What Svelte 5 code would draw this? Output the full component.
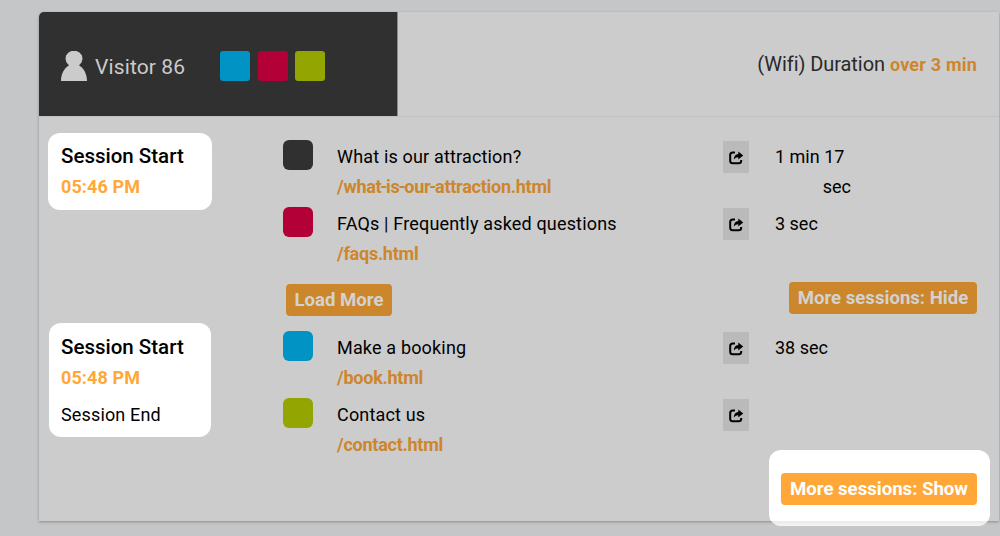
<script>
  const tags = ['#0093c4', '#b30036', '#92a500'];
  const sessions = [
    {
      time: '05:46 PM',
      ended: false,
      pages: [
        { color: '#303030', title: 'What is our attraction?', url: '/what-is-our-attraction.html', duration: '1 min 17', rest: 'sec' },
        { color: '#b30036', title: 'FAQs | Frequently asked questions', url: '/faqs.html', duration: '3 sec' }
      ]
    },
    {
      time: '05:48 PM',
      ended: true,
      pages: [
        { color: '#0093c4', title: 'Make a booking', url: '/book.html', duration: '38 sec' },
        { color: '#92a500', title: 'Contact us', url: '/contact.html', duration: '' }
      ]
    }
  ];
</script>

<div class="screen">
  <main class="card">
    <header>
      <div class="visitor">
        <svg class="person" width="26" height="30" viewBox="0 0 26 30" aria-hidden="true">
          <path d="M10.5 0h5l3 1.5L21 4.5 21.5 8 20.5 11.5 18 14.3C22.5 17 26 22.5 26 30H0C0 22.5 3.5 17 8 14.3L5.5 11.5 4.5 8 5 4.5 7.5 1.5z" fill="#cbcbcb" />
        </svg>
        <span class="name">Visitor 86</span>
        <div class="tags">
          {#each tags as color}
            <i class="tag" style="background:{color}"></i>
          {/each}
        </div>
      </div>
      <div class="total"><span class="label">(Wifi) Duration</span><b>over 3 min</b></div>
    </header>

    {#each sessions as session}
      <section class="session" class:second={session.ended}>
        <div class="info">
          <strong>Session Start</strong>
          <b>{session.time}</b>
          {#if session.ended}<span class="end">Session End</span>{/if}
        </div>
        <div class="pages">
          {#each session.pages as page}
            <div class="page">
              <i class="swatch" style="background:{page.color}"></i>
              <div class="text">
                <span class="title">{page.title}</span>
                <b>{#each page.url.split('-') as part, i}{#if i > 0}<span class="dash">-</span>{/if}{part}{/each}</b>
              </div>
              <button class="share" aria-label="Open page">
                <svg width="15" height="14" viewBox="0 0 15 14" aria-hidden="true">
                  <path d="M6 1.5H3.8Q1.2 1.5 1.2 4v5.8Q1.2 12.3 3.8 12.3h5.8Q12.2 12.3 12.2 9.8V9" fill="none" stroke="#000" stroke-width="2" />
                  <path d="M9.3 .5 14.2 4.6 9.3 8.4V6.2Q6.5 6.2 4.8 8.4 5 3.2 9.3 2.9z" />
                </svg>
              </button>
              <div class="time"><span>{page.duration}</span>{#if page.rest}<span class="rest">{page.rest}</span>{/if}</div>
            </div>
          {/each}
          {#if !session.ended}
            <div class="actions">
              <button class="action load">Load More</button>
              <button class="action hide">More sessions: Hide</button>
            </div>
          {/if}
        </div>
      </section>
    {/each}

    <footer><button class="action show">More sessions: Show</button></footer>
  </main>
</div>

<style>
  :global(body) { margin: 0; overflow: hidden; }
  * { box-sizing: border-box; }
  .screen {
    width: 1000px; height: 536px; padding: 12px 0 0 39px; overflow: hidden;
    background: #c5c6c8; font-family: Roboto, sans-serif; font-size: 18px; color: #000;
  }
  .card {
    display: flex; flex-direction: column; width: 960px; height: 509px;
    background: #cccccc; border-radius: 5px 0 0 0;
    box-shadow: 0 1px 3px rgba(0, 0, 0, .3);
  }
  header { display: flex; flex: none; height: 105px; border-bottom: 1px solid #c0c0c0; }
  .visitor {
    display: flex; align-items: center; width: 359px; height: 104px; padding: 4px 0 0 22px;
    background: #303030; border-right: 1px solid #8a8a8a; border-radius: 5px 0 0 0;
  }
  .person { flex: none; }
  .name { width: 125px; margin-left: 8px; padding-top: 2px; font-size: 21px; letter-spacing: .12px; line-height: 30px; color: #cbcbcb; white-space: nowrap; }
  .tags { display: flex; gap: 7.5px; }
  .tag { width: 30px; height: 30px; border-radius: 3px; }
  .total { display: flex; flex: 1; justify-content: flex-end; align-items: center; padding-right: 22px; color: #292929; }
  .total b { letter-spacing: .2px; }
  .label { margin-right: 5px; font-size: 20px; letter-spacing: -.07px; white-space: nowrap; }
  b { font-weight: 700; color: #cc862c; white-space: nowrap; }
  .session { display: flex; flex: none; height: 190px; padding-left: 9px; margin-top: 16px; }
  .session.second { height: 127px; margin-top: 0; padding-left: 10px; }
  .info {
    display: flex; flex: none; flex-direction: column; width: 164px; height: 77px;
    margin-right: 71px; padding: 8px 0 0 13px; background: #fff; border-radius: 12px;
  }
  .info strong { font-size: 20.5px; font-weight: 500; line-height: 30px; white-space: nowrap; }
  .info b { font-weight: 700; letter-spacing: .1px; line-height: 31px; color: #ffa837; }
  .second .info { width: 162px; height: 114px; margin-right: 72px; padding: 9px 0 0 12px; }
  .end { margin-top: 6px; letter-spacing: .15px; line-height: 31px; }
  .pages { flex: 1; padding-top: 7px; }
  .second .pages { padding-top: 8px; }
  .page { display: flex; height: 67px; }
  .swatch { flex: none; width: 30px; height: 30px; margin-right: 24px; border-radius: 6px; }
  .text { display: flex; flex: none; flex-direction: column; width: 386px; padding-top: 2px; line-height: 30px; }
  .title { letter-spacing: .17px; white-space: nowrap; }
  .text b { font-size: 18px; letter-spacing: -.25px; }
  .dash { margin: 0 -1.1px; }
  .share { display: flex; flex: none; width: 26px; height: 32px; margin: 1px 26px 0 0; padding: 10px 0 0 6px; border: 0; background: #bababa; }
  .time { display: flex; flex-direction: column; width: 76px; padding-top: 2px; line-height: 30px; white-space: nowrap; }
  .rest { align-self: flex-end; }
  .actions { display: flex; align-items: flex-start; justify-content: space-between; margin: 8px 22px 0 3px; }
  .action {
    height: 32px; padding: 0; border: 0; border-radius: 4px; background: #cc862c; color: #d2d2d2;
    font: 700 18.6px/32px Roboto, sans-serif; white-space: nowrap;
  }
  .load { width: 106px; margin-top: 2px; }
  .hide { width: 188px; }
  footer {
    display: flex; flex: none; align-self: flex-end; width: 221px; height: 76px; margin-right: 9px;
    padding: 23px 0 0 12px; border-radius: 12px;
    background: linear-gradient(#fff 71px, #e9e9e9 71px, #f5f5f5);
  }
  .show { width: 196px; background: #ffa837; color: #fff; }
</style>
